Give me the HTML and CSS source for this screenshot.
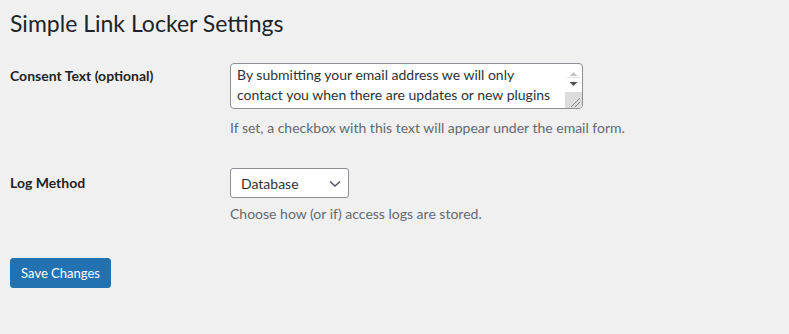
FILE: index.html
```html
<!DOCTYPE html>
<html lang="en">
<head>
  <meta charset="UTF-8" />
  <title>Simple Link Locker Settings</title>
  <link rel="stylesheet" href="styles.css">
</head>
<body>
  <div class="wrap">
    <h1>Simple Link Locker Settings</h1>

    <form class="settings-form">
      <!-- Consent text -->
      <div class="field-row">
        <label class="field-label" for="consent">Consent Text (optional)</label>
        <div class="field-input">
          <div class="textarea-wrap">
            <textarea id="consent" class="consent-text" rows="2">By submitting your email address we will only contact you when there are updates or new plugins released.</textarea>
            <div class="fake-scrollbar">
              <svg class="sb-buttons" width="17" height="27" viewBox="0 0 17 27">
                <path d="M4.5 12 L8.5 8 L12.5 12 Z" fill="#c4c4c4" />
                <line x1="2" y1="13.5" x2="15" y2="13.5" stroke="#e3e3e3" />
                <path d="M4.5 18 L12.5 18 L8.5 22 Z" fill="#505050" />
              </svg>
              <svg class="sb-corner" width="17" height="16" viewBox="0 0 17 16">
                <line x1="6" y1="15" x2="15" y2="6" stroke="#8a8a8a" />
                <line x1="10" y1="15" x2="15" y2="10" stroke="#8a8a8a" />
              </svg>
            </div>
          </div>
          <p class="description desc-consent">If set, a checkbox with this text will appear under the email form.</p>
        </div>
      </div>

      <!-- Log method -->
      <div class="field-row">
        <label class="field-label label-log" for="log-method">Log Method</label>
        <div class="field-input">
          <div class="select-wrap">
            <select id="log-method" class="log-select">
              <option>Database</option>
              <option>File</option>
              <option>None</option>
            </select>
            <svg class="chevron" width="12" height="8" viewBox="0 0 12 8">
              <path d="M1 1.5 L6 6 L11 1.5" fill="none" stroke="#50575e" stroke-width="1.6" />
            </svg>
          </div>
          <p class="description desc-log">Choose how (or if) access logs are stored.</p>
        </div>
      </div>

      <p class="submit">
        <button type="submit" class="button-primary">Save Changes</button>
      </p>
    </form>
  </div>
</body>
</html>
```
FILE: styles.css
```css
* {
  margin: 0;
  padding: 0;
  box-sizing: border-box;
}

body {
  background: #f0f0f1;
  color: #1d2327;
  font-family: Lato, "Liberation Sans", sans-serif;
  font-size: 14px;
}

.wrap {
  padding: 0 10px;
}

.wrap h1 {
  font-size: 23px;
  font-weight: 400;
  line-height: 30px;
  padding: 8px 0 5px;
}

/* Settings rows */
.settings-form {
  margin-top: 5px;
}
.field-row {
  display: flex;
  padding: 15px 0;
}
.field-label {
  width: 220px;
  flex-shrink: 0;
  font-weight: 700;
  line-height: 20px;
  margin-top: 3px;
}
.label-log {
  margin-top: 5px;
}

/* Textarea with windows-like scrollbar */
.textarea-wrap {
  position: relative;
  width: 353px;
  height: 46px;
}
.consent-text {
  display: block;
  width: 100%;
  height: 100%;
  padding: 1px 23px 1px 6px;
  border: 1px solid #8c8f94;
  border-radius: 4px;
  background: #fff;
  color: #2c3338;
  font: 14px/20px Lato, "Liberation Sans", sans-serif;
  overflow: hidden;
  resize: none;
}
.fake-scrollbar {
  position: absolute;
  top: 1px;
  right: 1px;
  bottom: 1px;
  width: 17px;
  display: flex;
  flex-direction: column;
  justify-content: space-between;
  border-radius: 0 3px 3px 0;
  overflow: hidden;
}
.sb-buttons,
.sb-corner {
  display: block;
}
.sb-corner {
  background: #dcdcdc;
}

.description {
  color: #646970;
  line-height: 21px;
}
.desc-consent {
  margin-top: 8px;
}
.desc-log {
  margin-top: 5px;
}

/* Select */
.select-wrap {
  position: relative;
  width: 119px;
}
.log-select {
  display: block;
  width: 100%;
  height: 30px;
  padding: 0 24px 0 10px;
  border: 1px solid #8c8f94;
  border-radius: 3px;
  background: #fff;
  color: #2c3338;
  font: 14px Lato, "Liberation Sans", sans-serif;
  appearance: none;
  -webkit-appearance: none;
}
.chevron {
  position: absolute;
  right: 8px;
  top: 12px;
  pointer-events: none;
}

/* Submit */
.submit {
  margin-top: 19px;
}
.button-primary {
  height: 30px;
  width: 101px;
  padding: 0 10px;
  border: 1px solid #2271b1;
  border-radius: 3px;
  background: #2271b1;
  color: #fff;
  font: 13px Lato, "Liberation Sans", sans-serif;
  cursor: pointer;
}
```
